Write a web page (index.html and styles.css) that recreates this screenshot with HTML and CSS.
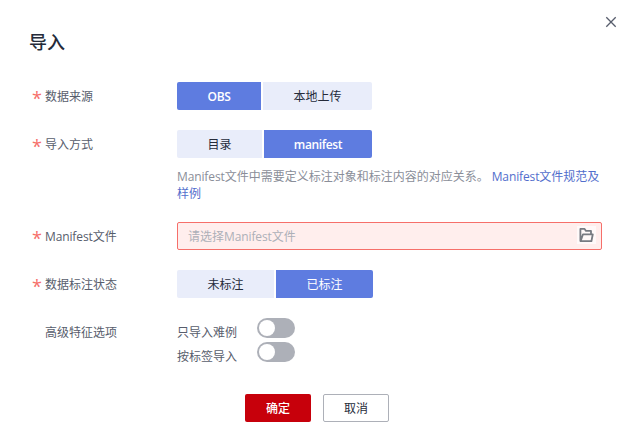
FILE: index.html
```html
<!DOCTYPE html>
<html lang="zh-CN">
<head>
<meta charset="utf-8">
<title>导入</title>
<link rel="stylesheet" href="styles.css">
</head>
<body>
<main class="dialog">
  <button class="close" aria-label="关闭"><svg width="12" height="12" viewBox="0 0 12 12"><path d="M1.3 1.3l9.4 9.4M10.7 1.3L1.3 10.7"/></svg></button>
  <h1 class="title">导入</h1>
  <div class="form">
    <div class="row">
      <div class="label required">数据来源</div>
      <div class="seg seg-source"><button class="on latin">OBS</button><button>本地上传</button></div>
    </div>
    <div class="row row-mode">
      <div class="label required">导入方式</div>
      <div class="control">
        <div class="seg seg-mode"><button>目录</button><button class="on latin">manifest</button></div>
        <p class="hint"><span class="latin">Manifest</span>文件中需要定义标注对象和标注内容的对应关系。<a class="link"><span class="latin">Manifest</span>文件规范及<br>样例</a></p>
      </div>
    </div>
    <div class="row">
      <div class="label required"><span class="latin">Manifest</span>文件</div>
      <div class="field">
        <span class="placeholder">请选择<span class="latin">Manifest</span>文件</span>
        <span class="folder"><svg width="18" height="18" viewBox="0 0 18 18"><path d="M3.4 15.2V2.9h4.2l1.4 2h5v2.8M3.6 15.2L6 8.3h9.8l-1.4 6.9z"/></svg></span>
      </div>
    </div>
    <div class="row">
      <div class="label required">数据标注状态</div>
      <div class="seg seg-state"><button>未标注</button><button class="on">已标注</button></div>
    </div>
    <div class="row">
      <div class="label">高级特征选项</div>
      <div class="options">
        <div class="option"><span class="option-name">只导入难例</span><span class="switch"></span></div>
        <div class="option"><span class="option-name">按标签导入</span><span class="switch"></span></div>
      </div>
    </div>
  </div>
  <div class="actions"><button class="primary">确定</button><button class="secondary">取消</button></div>
</main>
</body>
</html>
```
FILE: styles.css
```css
* { box-sizing: border-box; }
body {
  margin: 0;
  background: #fff;
  color: #575d6c;
  font: 12px/18px "Open Sans", "Noto Sans CJK SC", sans-serif;
  overflow: hidden;
}
button { margin: 0; padding: 0; border: 0; background: none; font: inherit; color: inherit; }
.latin { letter-spacing: -0.12px; }
.dialog { position: relative; width: 629px; height: 434px; padding: 30px 27px 0 29px; }
.close { position: absolute; left: 605px; top: 16px; width: 12px; height: 12px; display: flex; }
.close path { fill: none; stroke: #575d6c; stroke-width: 1.3; }
.title { margin: 0; height: 52px; font-size: 18px; line-height: 24px; font-weight: 500; color: #252b3a; }
.form { display: flex; flex-direction: column; gap: 20px; }
.row { display: grid; grid-template-columns: 148px 425px; align-items: start; min-height: 28px; }
.row-mode { height: 72px; }
.label { padding-left: 16px; line-height: 30px; height: 28px; }
.required { padding-left: 3px; display: flex; }
.required::before { content: "*"; width: 13px; flex: none; color: #f66f6a; font-size: 18px; line-height: 33px; height: 28px; }
.seg { display: grid; gap: 2px; height: 28px; }
.seg-source { grid-template-columns: 84px 109px; }
.seg-mode { grid-template-columns: 85px 108px; }
.seg-state { grid-template-columns: 97px 97px; }
.seg button { background: #e9edfa; color: #252b3a; line-height: 28px; padding-top: 1px; height: 28px; }
.seg button:first-child { border-radius: 2px 0 0 2px; }
.seg button:last-child { border-radius: 0 2px 2px 0; }
.seg .on { background: #5e7ce0; color: #fff; }
.seg .on.latin { font-weight: 600; letter-spacing: -0.35px; }
.hint { margin: 10px 0 0; color: #8a8e99; line-height: 17px; white-space: nowrap; }
.link { color: #526ecc; margin-left: 3px; }
.field { display: flex; align-items: center; justify-content: space-between; height: 28px; padding: 0 5px 0 10px; border: 1px solid #f66f6a; border-radius: 2px; background: #ffeeed; }
.placeholder { color: #adb0b8; padding-top: 2px; }
.folder { display: flex; width: 19px; height: 18px; background: #fff9f9; margin-top: -2px; }
.folder path { fill: none; stroke: #777b82; stroke-width: 1.8; stroke-linejoin: round; }
.options { display: flex; flex-direction: column; gap: 4px; }
.option { display: flex; height: 20px; }
.option-name { width: 80px; padding-top: 6px; }
.switch { width: 38px; height: 20px; padding: 2px; border-radius: 10px; background: #adb0b8; }
.switch::before { content: ""; display: block; width: 16px; height: 16px; border-radius: 50%; background: #fff; }
.actions { display: flex; gap: 12px; margin: 32px 0 0 216px; }
.actions button { width: 66px; height: 28px; border-radius: 2px; line-height: 28px; padding-top: 1px; }
.actions .primary { background: #c7000b; color: #fff; font-weight: 500; }
.actions .secondary { border: 1px solid #adb0b8; color: #252b3a; line-height: 26px; }
```
